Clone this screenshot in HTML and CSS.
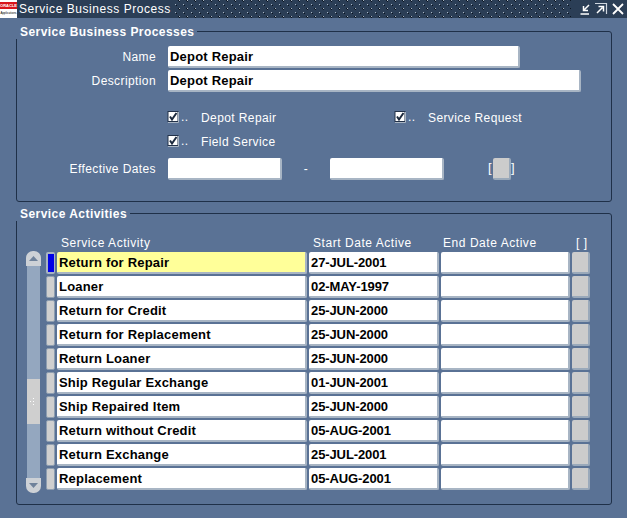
FILE: index.html
```
<!DOCTYPE html>
<html lang="en">
<head>
<meta charset="utf-8">
<title>Service Business Process</title>
<link rel="stylesheet" href="styles.css">
</head>
<body>
<div class="window">
  <header class="titlebar">
    <div class="logo"><span class="logo-red">ORACLE</span><span class="logo-sub">Applications</span></div>
    <span class="title">Service Business Process</span>
    <svg class="dots" height="18" aria-hidden="true"><defs><pattern id="dotpat" width="8" height="8" patternUnits="userSpaceOnUse" y="1"><rect x="1" y="3" width="1" height="1" fill="#aab6c4"/><rect x="2" y="4" width="1" height="1" fill="#0b1420"/><rect x="5" y="7" width="1" height="1" fill="#aab6c4"/><rect x="6" y="8" width="1" height="1" fill="#0b1420"/><rect x="5" y="0" width="1" height="1" fill="#0b1420"/><rect x="4" y="7" width="1" height="1" fill="#0b1420"/></pattern></defs><rect width="100%" height="18" fill="url(#dotpat)"/></svg>
    <svg class="winbtn" width="14" height="14" viewBox="0 0 14 14" aria-hidden="true"><path d="M10 3 5 8M4.500 4V8.500H9M1.500 12H10" fill="none" stroke="#fff" stroke-width="1.500"/></svg>
    <svg class="winbtn" width="14" height="14" viewBox="0 0 14 14" aria-hidden="true"><path d="M0 1.500H11.500V12" fill="none" stroke="#cfd6df" stroke-width="1.200"/><path d="M2 11 7.500 5.500M3.500 4.500H8.500V9.500" fill="none" stroke="#fff" stroke-width="1.500"/></svg>
    <svg class="winbtn" width="14" height="14" viewBox="0 0 14 14" aria-hidden="true"><path d="M2 2 12 12M12 2 2 12" fill="none" stroke="#fff" stroke-width="1.800"/></svg>
  </header>

  <section class="group group-top">
    <h2 class="legend">Service Business Processes</h2>
    <div class="row row-first"><label class="lbl">Name</label><div class="field f-name">Depot Repair</div></div>
    <div class="row row-desc"><label class="lbl">Description</label><div class="field f-desc">Depot Repair</div></div>
    <div class="checks">
      <div class="check c-wide"><svg class="box" width="15" height="15" viewBox="0 0 15 15" aria-hidden="true"><rect x="2" y="1.500" width="10" height="10" fill="#fff" stroke="#22324a"/><path d="M12.500 2V12.500H2" fill="none" stroke="#a9b5c3"/><path d="M4 6.500 6 9.500 10.500 3" fill="none" stroke="#1c2a3e" stroke-width="2"/></svg><span class="dd">..</span><span class="cl">Depot Repair</span></div>
      <div class="check"><svg class="box" width="15" height="15" viewBox="0 0 15 15" aria-hidden="true"><rect x="2" y="1.500" width="10" height="10" fill="#fff" stroke="#22324a"/><path d="M12.500 2V12.500H2" fill="none" stroke="#a9b5c3"/><path d="M4 6.500 6 9.500 10.500 3" fill="none" stroke="#1c2a3e" stroke-width="2"/></svg><span class="dd">..</span><span class="cl">Service Request</span></div>
    </div>
    <div class="checks checks-2">
      <div class="check"><svg class="box" width="15" height="15" viewBox="0 0 15 15" aria-hidden="true"><rect x="2" y="1.500" width="10" height="10" fill="#fff" stroke="#22324a"/><path d="M12.500 2V12.500H2" fill="none" stroke="#a9b5c3"/><path d="M4 6.500 6 9.500 10.500 3" fill="none" stroke="#1c2a3e" stroke-width="2"/></svg><span class="dd">..</span><span class="cl">Field Service</span></div>
    </div>
    <div class="row row-dates">
      <label class="lbl">Effective Dates</label>
      <div class="field f-date"></div>
      <span class="dash">-</span>
      <div class="field f-date"></div>
      <span class="bracket b-open">[</span><div class="gbtn g-main"></div><span class="bracket">]</span>
    </div>
  </section>

  <section class="group group-bottom">
    <h2 class="legend">Service Activities</h2>
    <div class="t-head">
      <span class="th th-name">Service Activity</span>
      <span class="th th-start">Start Date Active</span>
      <span class="th th-end">End Date Active</span>
      <span class="th th-b">[ ]</span>
    </div>
    <div class="t-body">
      <div class="scroll">
        <div class="cap cap-up"><svg width="9" height="5" viewBox="0 0 9 5" aria-hidden="true"><path d="M4.500 0 9 5H0Z" fill="#6f829b"/></svg></div>
        <div class="track"></div>
        <div class="thumb"><svg width="9" height="9" viewBox="0 0 9 9" aria-hidden="true"><path d="M4 1h1v1H4zM1 4h1v1H1zM4 4h1v1H4zM4 7h1v1H4z" fill="#fff"/></svg></div>
        <div class="track track-b"></div>
        <div class="cap cap-down"><svg width="9" height="5" viewBox="0 0 9 5" aria-hidden="true"><path d="M0 0H9L4.500 5Z" fill="#6f829b"/></svg></div>
      </div>
      <div class="rows">
        <div class="t-row"><div class="ind ind-on"></div><div class="field cell cur">Return for Repair</div><div class="field cell date">27-JUL-2001</div><div class="field cell"></div><div class="gbtn"></div></div>
        <div class="t-row"><div class="ind"></div><div class="field cell">Loaner</div><div class="field cell date">02-MAY-1997</div><div class="field cell"></div><div class="gbtn"></div></div>
        <div class="t-row"><div class="ind"></div><div class="field cell">Return for Credit</div><div class="field cell date">25-JUN-2000</div><div class="field cell"></div><div class="gbtn"></div></div>
        <div class="t-row"><div class="ind"></div><div class="field cell">Return for Replacement</div><div class="field cell date">25-JUN-2000</div><div class="field cell"></div><div class="gbtn"></div></div>
        <div class="t-row"><div class="ind"></div><div class="field cell">Return Loaner</div><div class="field cell date">25-JUN-2000</div><div class="field cell"></div><div class="gbtn"></div></div>
        <div class="t-row"><div class="ind"></div><div class="field cell">Ship Regular Exchange</div><div class="field cell date">01-JUN-2001</div><div class="field cell"></div><div class="gbtn"></div></div>
        <div class="t-row"><div class="ind"></div><div class="field cell">Ship Repaired Item</div><div class="field cell date">25-JUN-2000</div><div class="field cell"></div><div class="gbtn"></div></div>
        <div class="t-row"><div class="ind"></div><div class="field cell">Return without Credit</div><div class="field cell date">05-AUG-2001</div><div class="field cell"></div><div class="gbtn"></div></div>
        <div class="t-row"><div class="ind"></div><div class="field cell">Return Exchange</div><div class="field cell date">25-JUL-2001</div><div class="field cell"></div><div class="gbtn"></div></div>
        <div class="t-row"><div class="ind"></div><div class="field cell">Replacement</div><div class="field cell date">05-AUG-2001</div><div class="field cell"></div><div class="gbtn"></div></div>
      </div>
    </div>
  </section>
</div>
</body>
</html>
```
FILE: styles.css
```
html, body { margin: 0; padding: 0; }
body { width: 627px; height: 518px; overflow: hidden; background: #5a7295; }
.window {
  width: 627px; height: 518px; background: #5a7295; color: #fff;
  font-family: "Liberation Sans", Arial, sans-serif; font-size: 12px; letter-spacing: .4px;
  box-sizing: border-box;
}
.titlebar { height: 18px; background: #2b3e56; display: flex; align-items: center; }
.logo { width: 17px; height: 18px; background: #fff; display: flex; flex-direction: column; flex: none; color: #000; }
.logo-red { background: #d8141c; color: #fff; font-size: 4px; font-weight: bold; line-height: 7px; height: 7px; margin-top: 2px; letter-spacing: 0; text-align: center; }
.logo-sub { font-size: 3px; line-height: 8px; letter-spacing: 0; white-space: nowrap; text-align: center; }
.title { margin-left: 2px; font-size: 12px; letter-spacing: .55px; white-space: nowrap; width: 155px; flex: none; }
.dots { flex: 1; min-width: 0; margin-right: 8px; }
.winbtn { flex: none; margin-right: 2px; }

.group {
  margin-left: 16px; width: 596px; box-sizing: border-box;
  border: 1px solid #1f3048; border-radius: 3px;
}
.group-top { margin-top: 13px; height: 171px; }
.group-bottom { margin-top: 11px; height: 292px; }
.legend {
  margin: -8px 0 0 -1px; padding: 0 3px 0 4px; width: fit-content; height: 15px;
  font-size: 12px; line-height: 17px; font-weight: bold; letter-spacing: .45px; background: #5a7295; color: #fff;
}

.row { display: flex; align-items: center; height: 22px; }
.row-first { margin-top: 7px; }
.row-desc { margin-top: 2px; }
.row-dates { margin-top: 6px; }
.lbl { width: 139px; margin-right: 12px; text-align: right; flex: none; }

.field {
  box-sizing: border-box; height: 22px; background: #fff; color: #000;
  border-right: 2px solid #a8b5c4; border-bottom: 2px solid #a8b5c4; border-radius: 2px;
  font-weight: bold; font-size: 13px; line-height: 21px; padding-left: 2px; letter-spacing: .2px; white-space: nowrap; overflow: hidden;
}
.date { letter-spacing: -.1px; }
.f-name { width: 352px; }
.f-desc { width: 413px; }
.f-date { width: 114px; }
.dash { width: 48px; text-align: center; }
.bracket { font-size: 13px; margin: -3px 0 0 0; }
.b-open { margin: -3px 1px 0 44px; }

.checks { display: flex; height: 22px; margin: 14px 0 0 151px; align-items: center; }
.checks-2 { margin-top: 2px; }
.check { display: flex; align-items: center; }
.c-wide { width: 227px; }
.box { flex: none; margin-left: -2px; }
.dd { width: 20px; flex: none; }
.cl { white-space: nowrap; padding-top: 1px; }

.gbtn {
  box-sizing: border-box; height: 22px; background: #cccccc;
  border: 1px solid #9aa9ba; border-width: 0 2px 2px 0; border-radius: 2px;
}
.g-main { width: 18px; }

.t-head { height: 17px; margin-top: 14px; line-height: 16px; display: flex; letter-spacing: .55px; }
.th { flex: none; white-space: nowrap; }
.th-name { margin-left: 44px; width: 252px; }
.th-start { width: 130px; }
.th-end { width: 133px; }

.t-body { display: flex; margin: 0 0 0 9px; }
.scroll { width: 15px; height: 242px; display: flex; flex-direction: column; flex: none; margin-top: -1px; }
.cap { height: 15px; background: #cdd1d6; display: flex; align-items: center; justify-content: center; flex: none; }
.cap-up { border-radius: 7px 7px 0 0; }
.cap-down { border-radius: 0 0 7px 7px; }
.track { height: 113px; background: #94a7bf; flex: none; margin: 0 1px; }
.track-b { height: 54px; }
.thumb { height: 45px; background: #cfcfcf; flex: none; margin: 0 1px; display: flex; align-items: center; justify-content: center; }

.rows { margin-left: 5px; display: flex; flex-direction: column; gap: 2px; }
.t-row { display: grid; grid-template-columns: 9px 250px 130px 129px 18px; column-gap: 2px; height: 22px; }
.ind { box-sizing: border-box; background: #cfcfcf; border: 1px solid #8d9db0; border-radius: 2px; }
.ind-on { background: #0000e6; border: solid #a7b3c2; border-width: 2px 1px 2px 2px; }
.cur { background: #ffff99; }
.cell { height: 22px; }
```
